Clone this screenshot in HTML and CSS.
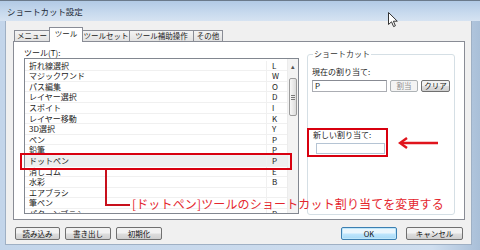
FILE: index.html
```html
<!DOCTYPE html>
<html>
<head>
  <meta charset="utf-8">
  <title>ショートカット設定</title>
  <link rel="stylesheet" href="styles.css">
</head>
<body>
  <div class="window">
    <div class="titlebar">
      <span class="title">ショートカット設定</span>
    </div>
    <div class="frame">
      <div class="client">
        <div class="tabs">
          <span class="tab t-menu">メニュー</span>
          <span class="tab t-tool active">ツール</span>
          <span class="tab t-set">ツールセット</span>
          <span class="tab t-aux">ツール補助操作</span>
          <span class="tab t-etc">その他</span>
        </div>
        <div class="panel">
          <div class="tools">
            <div class="label">ツール(T):</div>
            <div class="list">
              <div class="rows">
                <div class="row"><span class="name">折れ線選択</span><span class="key">L</span></div>
                <div class="row"><span class="name">マジックワンド</span><span class="key">W</span></div>
                <div class="row"><span class="name">パス編集</span><span class="key">O</span></div>
                <div class="row"><span class="name">レイヤー選択</span><span class="key">D</span></div>
                <div class="row"><span class="name">スポイト</span><span class="key">I</span></div>
                <div class="row"><span class="name">レイヤー移動</span><span class="key">K</span></div>
                <div class="row"><span class="name">3D選択</span><span class="key">Y</span></div>
                <div class="row"><span class="name">ペン</span><span class="key">P</span></div>
                <div class="row"><span class="name">鉛筆</span><span class="key">P</span></div>
                <div class="row selected"><span class="name">ドットペン</span><span class="key">P</span></div>
                <div class="row"><span class="name">消しゴム</span><span class="key">E</span></div>
                <div class="row"><span class="name">水彩</span><span class="key">B</span></div>
                <div class="row"><span class="name">エアブラシ</span><span class="key"></span></div>
                <div class="row"><span class="name">筆ペン</span><span class="key"></span></div>
                <div class="row"><span class="name">パターンブラシ</span><span class="key">P</span></div>
              </div>
              <div class="scrollbar">
                <div class="sb-up">&#9652;</div>
                <div class="sb-thumb"><span class="grip"></span></div>
              </div>
            </div>
          </div>
          <fieldset class="shortcut">
            <legend>ショートカット</legend>
            <div class="field-label">現在の割り当て:</div>
            <div class="field-row">
              <div class="input current">P</div>
              <span class="btn small disabled">割当</span>
              <span class="btn small">クリア</span>
            </div>
            <div class="field-label new-label">新しい割り当て:</div>
            <div class="input new"></div>
          </fieldset>
        </div>
        <div class="footer">
          <div class="btn-group">
            <span class="btn w45">読み込み</span>
            <span class="btn w46">書き出し</span>
            <span class="btn w46">初期化</span>
          </div>
          <div class="btn-group right">
            <span class="btn default w56">OK</span>
            <span class="btn w57">キャンセル</span>
          </div>
        </div>
      </div>
    </div>

    <!-- annotations drawn over the dialog -->
    <div class="mark mark-row"></div>
    <div class="mark-lead"></div>
    <div class="note">[ドットペン]ツールのショートカット割り当てを変更する</div>
    <div class="mark mark-new"></div>
    <svg class="arrow" width="42" height="12" viewBox="0 0 42 12">
      <path d="M40 6H4" stroke="#e0141c" stroke-width="2.4" fill="none"/>
      <path d="M9 1L2 6L9 11" stroke="#e0141c" stroke-width="2.4" fill="none"/>
    </svg>
    <svg class="cursor" width="11" height="16" viewBox="0 0 11 16">
      <path d="M0.5 0.5V12.5L3.5 9.8L5.6 14.6L7.4 13.8L5.4 9.2H9.3Z" fill="#fff" stroke="#333" stroke-width="1"/>
    </svg>
  </div>
</body>
</html>
```

FILE: styles.css
```css
html, body {
    margin: 0;
    padding: 0;
    overflow: hidden;
}

body {
    font-family: "Noto Sans CJK JP", "Noto Sans", sans-serif;
    font-size: 8px;
    color: #1a1a1a;
}

.window {
    position: relative;
    width: 480px;
    height: 250px;
    background: linear-gradient(to right, #c3d5ea, #cfdeef 90%, #a9bfd8);
}

.titlebar {
    height: 21px;
    box-sizing: border-box;
    border-top: 1px solid #6b7a8b;
    background: linear-gradient(#b2cae5, #c8daee 60%, #d6e3f2);
    display: flex;
    align-items: center;
    padding-left: 7px;
}

.title {
    font-size: 8.5px;
    color: #1e2a36;
    letter-spacing: -0.1px;
}

.frame {
    padding: 0 8px 0 5px;
}

.client {
    height: 224px;
    box-sizing: border-box;
    background: #f0f0f0;
    border-left: 1px solid #9fb0c4;
    border-right: 1px solid #9fb0c4;
    border-bottom: 1px solid #9fb0c4;
    padding: 6px 6px 0 7px;
}

/* tabs */
.tabs {
    display: flex;
    align-items: flex-end;
    height: 14px;
    padding-left: 1px;
}

.tab {
    box-sizing: border-box;
    height: 11px;
    line-height: 10px;
    text-align: center;
    border: 1px solid #898c95;
    border-bottom: none;
    margin-right: -1px;
    background: linear-gradient(#f4f4f4, #e1e1e1);
    color: #222;
    font-size: 7.5px;
    white-space: nowrap;
}

.tab.active {
    position: relative;
    z-index: 1;
    height: 15px;
    line-height: 12px;
    margin-bottom: -1px;
    background: #fff;
}

.t-menu { width: 36px; }
.t-tool { width: 34px; }
.t-set { width: 48px; }
.t-aux { width: 65px; }
.t-etc { width: 30px; }

/* tab page */
.panel {
    height: 179px;
    box-sizing: border-box;
    border: 1px solid #898c95;
    background: #fff;
    display: flex;
    padding: 5px 9px 0 10px;
}

.tools {
    width: 275px;
}

.label {
    height: 11px;
    line-height: 11px;
}

.list {
    height: 156px;
    box-sizing: border-box;
    border: 1px solid #828790;
    display: flex;
    overflow: hidden;
}

.rows {
    flex: 1;
    padding-top: 1.7px;
}

.row {
    display: flex;
    height: 10.6px;
    line-height: 10px;
    box-sizing: border-box;
    border-bottom: 1px solid #f0f0f0;
}

.row.selected {
    background: #eeeeee;
}

.name {
    flex: 1;
    padding-left: 4px;
    white-space: nowrap;
}

.key {
    width: 21px;
    box-sizing: border-box;
    padding-left: 5px;
    border-left: 1px solid #f0f0f0;
}

.scrollbar {
    width: 10px;
    background: #f3f3f3;
    border-left: 1px solid #ececec;
}

.sb-up {
    height: 14px;
    line-height: 14px;
    text-align: center;
    font-size: 7px;
    color: #555;
}

.sb-thumb {
    margin: 5px 0 0 1px;
    width: 8px;
    height: 38px;
    box-sizing: border-box;
    border: 1px solid #9c9c9c;
    border-radius: 2px;
    background: linear-gradient(to right, #f8f8f8, #dcdcdc);
    display: flex;
    align-items: center;
    justify-content: center;
}

.grip {
    width: 4px;
    height: 5px;
    background: repeating-linear-gradient(#7a7a7a 0 1px, transparent 1px 2px);
}

/* shortcut group */
.shortcut {
    margin: 2px 0 0 8px;
    padding: 0 4px;
    width: 148px;
    height: 166px;
    box-sizing: border-box;
    border: 1px solid #d5dfe5;
    border-radius: 3px;
    min-width: 0;
}

.shortcut legend {
    padding: 0 1px;
    margin-left: 1px;
    line-height: 10px;
    color: #333;
}

.field-label {
    margin-top: 8px;
    line-height: 10px;
}

.field-label.new-label {
    margin-top: 38px;
    padding-left: 1px;
}

.field-row {
    display: flex;
    margin-top: 3px;
    gap: 3px;
}

.input {
    box-sizing: border-box;
    height: 12px;
    line-height: 10px;
    border: 1px solid #abadb3;
    border-top-color: #888b93;
    background: #fff;
    padding-left: 2px;
}

.input.current {
    width: 75px;
}

.input.new {
    width: 69px;
    height: 11px;
    margin: 3px 0 0 4px;
    border-color: #b5c4d4;
}

/* buttons */
.btn {
    box-sizing: border-box;
    display: inline-block;
    height: 13px;
    line-height: 11px;
    text-align: center;
    border: 1px solid #707070;
    border-radius: 2px;
    background: linear-gradient(#f2f2f2 45%, #dddddd 55%, #cfcfcf);
    color: #111;
    font-size: 7.5px;
    white-space: nowrap;
}

.btn.small {
    height: 12px;
    line-height: 10px;
}

.btn.small:first-of-type {
    width: 28px;
}

.btn.small:last-child {
    width: 29px;
}

.btn.disabled {
    border-color: #adb2b5;
    background: #f4f4f4;
    color: #8d8d8d;
}

.btn.default {
    border-color: #3c7fb1;
    background: linear-gradient(#eaf6fd 45%, #bee6fd 55%, #a7d9f5);
    box-shadow: inset 0 0 0 1px #bfe7fb;
}

.w45 { width: 45px; }
.w46 { width: 46px; }
.w56 { width: 56px; }
.w57 { width: 57px; }

.footer {
    display: flex;
    justify-content: space-between;
    margin-top: 7px;
    padding: 0 2px;
}

.btn-group {
    display: flex;
    gap: 5px;
}

.btn-group.right {
    gap: 9px;
}

/* annotations */
.mark {
    position: absolute;
    box-sizing: border-box;
    border: 2px solid #d8000f;
}

.mark-row {
    left: 20px;
    top: 153px;
    width: 272px;
    height: 17px;
}

.mark-new {
    left: 307px;
    top: 128px;
    width: 81px;
    height: 29px;
}

.mark-lead {
    position: absolute;
    left: 105px;
    top: 170px;
    width: 25px;
    height: 36px;
    box-sizing: border-box;
    border-left: 2px solid #c8101c;
    border-bottom: 2px solid #c8101c;
}

.note {
    position: absolute;
    left: 132px;
    top: 196px;
    font-size: 12px;
    line-height: 15px;
    color: #e4262e;
    white-space: nowrap;
    letter-spacing: 0.15px;
}

.arrow {
    position: absolute;
    left: 398px;
    top: 137px;
}

.cursor {
    position: absolute;
    left: 388px;
    top: 12px;
}
```
